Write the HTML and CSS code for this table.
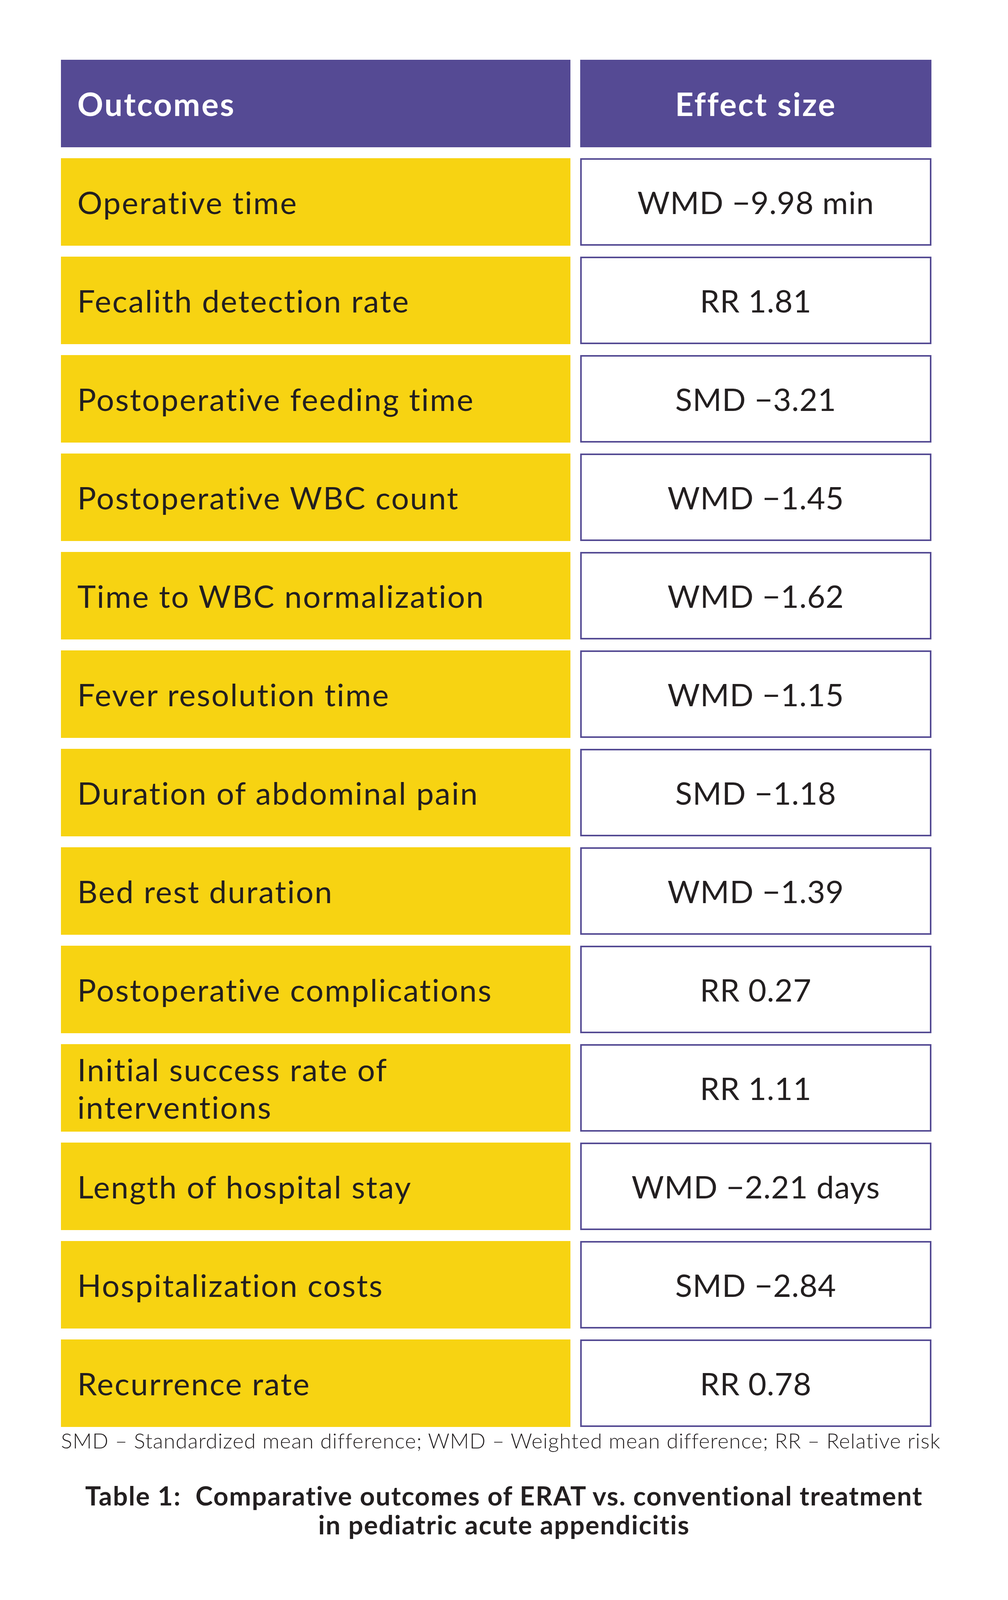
FILE: index.html
```html
<!DOCTYPE html>
<html lang="en">
<head>
<meta charset="utf-8">
<title>Table 1: Comparative outcomes of ERAT vs. conventional treatment</title>
<link rel="stylesheet" href="styles.css">
</head>
<body>
<main class="page">
  <div class="table">
    <div class="th th-outcome">Outcomes</div>
    <div class="th th-effect">Effect size</div>

    <div class="cell outcome">Operative time</div>
    <div class="cell effect">WMD −9.98 min</div>

    <div class="cell outcome">Fecalith detection rate</div>
    <div class="cell effect">RR 1.81</div>

    <div class="cell outcome">Postoperative feeding time</div>
    <div class="cell effect">SMD −3.21</div>

    <div class="cell outcome">Postoperative WBC count</div>
    <div class="cell effect">WMD −1.45</div>

    <div class="cell outcome">Time to WBC normalization</div>
    <div class="cell effect">WMD −1.62</div>

    <div class="cell outcome">Fever resolution time</div>
    <div class="cell effect">WMD −1.15</div>

    <div class="cell outcome">Duration of abdominal pain</div>
    <div class="cell effect">SMD −1.18</div>

    <div class="cell outcome">Bed rest duration</div>
    <div class="cell effect">WMD −1.39</div>

    <div class="cell outcome">Postoperative complications</div>
    <div class="cell effect">RR 0.27</div>

    <div class="cell outcome">Initial success rate of<br>interventions</div>
    <div class="cell effect">RR 1.11</div>

    <div class="cell outcome">Length of hospital stay</div>
    <div class="cell effect">WMD −2.21 days</div>

    <div class="cell outcome">Hospitalization costs</div>
    <div class="cell effect">SMD −2.84</div>

    <div class="cell outcome">Recurrence rate</div>
    <div class="cell effect">RR 0.78</div>
  </div>
  <p class="footnote">SMD – Standardized mean difference; WMD – Weighted mean difference; RR – Relative risk</p>
  <p class="caption">Table 1:&nbsp; Comparative outcomes of ERAT vs. conventional treatment<br>in pediatric acute appendicitis</p>
</main>
</body>
</html>
```

FILE: styles.css
```css
* {
  box-sizing: border-box;
}

html, body {
  margin: 0;
  padding: 0;
  background: #ffffff;
}

body {
  font-family: Lato, "Noto Sans", "Liberation Sans", sans-serif;
  color: #231f20;
}

.page {
  width: 2580px;
  padding-top: 153px;
  padding-bottom: 60px;
}

.table {
  margin-left: 156px;
  display: grid;
  grid-template-columns: 1304px 899px;
  grid-auto-rows: 224px;
  column-gap: 25px;
  row-gap: 28px;
}

.th {
  background: #554a94;
  color: #ffffff;
  font-weight: 700;
  font-size: 82px;
  letter-spacing: 3.5px;
  display: flex;
  align-items: center;
}

.th-outcome {
  padding-left: 42px;
}

.th-effect {
  justify-content: center;
}

.cell {
  font-size: 80px;
  font-weight: 400;
  line-height: 96px;
  display: flex;
  align-items: center;
}

.outcome {
  background: #f7d312;
  padding: 0 42px;
  letter-spacing: 2.8px;
}

.effect {
  background: #ffffff;
  border: 4px solid #544a93;
  justify-content: center;
  text-align: center;
  letter-spacing: 1px;
}

.footnote {
  margin: 5px 0 0 156px;
  font-size: 54px;
  font-weight: 300;
  line-height: 59px;
  letter-spacing: 1.2px;
  white-space: nowrap;
}

.caption {
  margin: 74px 0 0;
  text-align: center;
  font-size: 67px;
  font-weight: 700;
  line-height: 74px;
  letter-spacing: 2px;
}
```
